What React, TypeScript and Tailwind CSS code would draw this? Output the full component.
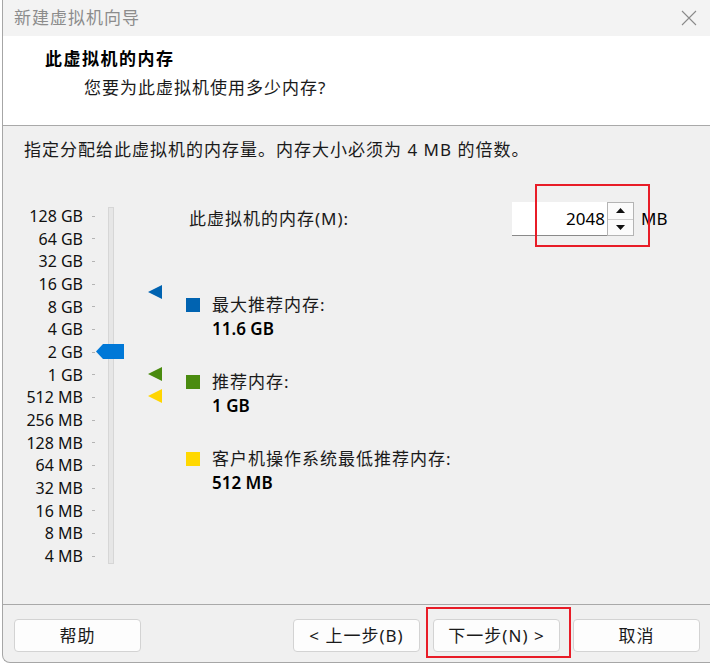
const levels = [
  '128 GB', '64 GB', '32 GB', '16 GB', '8 GB', '4 GB', '2 GB', '1 GB',
  '512 MB', '256 MB', '128 MB', '64 MB', '32 MB', '16 MB', '8 MB', '4 MB',
];

const font = "font-['Noto_Sans','Noto_Sans_CJK_SC',sans-serif]";

function Marker({ color, top }: { color: string; top: number }) {
  return (
    <svg
      width="14"
      height="14"
      viewBox="0 0 14 14"
      className="absolute left-[145px]"
      style={{ top }}
    >
      <polygon points="0,7 14,0 14,14" fill={color} />
    </svg>
  );
}

function Legend({ color, label, value }: { color: string; label: string; value: string }) {
  return (
    <div className="flex items-start">
      <div className={`w-[14px] h-[14px] mt-[5px] ${color}`}></div>
      <div className="ml-[12px] flex flex-col">
        <div className="h-[24px] leading-[24px] text-[17px] tracking-[1px] text-[#1a1a1a]">{label}</div>
        <div className="h-[24px] leading-[24px] text-[17px] font-semibold text-black">{value}</div>
      </div>
    </div>
  );
}

function Button({ children }: { children: React.ReactNode }) {
  return (
    <button
      type="button"
      className="w-[127px] h-[33px] bg-[#fdfdfd] border border-[#d3d3d3] rounded-[4px] text-[17px] tracking-[1px] text-[#1a1a1a] flex items-center justify-center"
    >
      {children}
    </button>
  );
}

export default function App() {
  return (
    <div className={`relative w-[710px] h-[663px] bg-white pl-[2px] ${font}`}>
      <div className="w-full h-full flex flex-col bg-[#f0f0f0] border-l border-b border-[#a6a6a6] rounded-bl-[8px] overflow-hidden">
        {/* title bar */}
        <div className="h-[36px] shrink-0 bg-[#f3f3f3] flex items-center justify-between pl-[11px] pr-[13px]">
          <span className="text-[17px] tracking-[1px] text-[#8c8c8c]">新建虚拟机向导</span>
          <svg width="16" height="16" viewBox="0 0 16 16" className="-mt-[1px]">
            <path d="M1 1 L15 15 M15 1 L1 15" stroke="#8a8a8a" strokeWidth="1.1" fill="none" />
          </svg>
        </div>

        {/* header */}
        <div className="h-[90px] shrink-0 bg-white border-b border-[#a9a9a9] pl-[42px] pt-[11px]">
          <div className="h-[24px] leading-[24px] text-[17px] tracking-[1.5px] font-bold text-black">此虚拟机的内存</div>
          <div className="mt-[5px] ml-[39px] h-[24px] leading-[24px] text-[17px] tracking-[1px] text-[#1a1a1a]">
            您要为此虚拟机使用多少内存?
          </div>
        </div>

        {/* body */}
        <div className="flex-1 flex flex-col">
          <div className="pl-[21px] pt-[12px] h-[36px] leading-[24px] text-[17px] tracking-[1px] text-[#1a1a1a]">
            指定分配给此虚拟机的内存量。内存大小必须为 4 MB 的倍数。
          </div>

          <div className="mt-[40px] flex">
            {/* slider */}
            <div className="relative w-[167px] h-[363px] mt-[3px] flex">
              <div className="w-[80px] flex flex-col">
                {levels.map((l) => (
                  <div key={l} className="h-[22.667px] leading-[22.667px] text-right text-[16px] text-[#111]">
                    {l}
                  </div>
                ))}
              </div>
              <div className="ml-[9px] w-[3px] flex flex-col">
                {levels.map((l) => (
                  <div key={l} className="h-[22.667px] flex items-center">
                    <div className="w-[3px] h-px bg-[#b4b4b4]"></div>
                  </div>
                ))}
              </div>
              <div className="ml-[13px] mt-[2px] w-[6px] h-[357px] bg-[#e6e6e6] border border-[#d6d6d6]"></div>

              <svg width="28" height="15" viewBox="0 0 28 15" className="absolute left-[93px] top-[139px]">
                <polygon points="0,7.5 7,0 28,0 28,15 7,15" fill="#0078d7" />
              </svg>
              <Marker color="#0063b1" top={80} />
              <Marker color="#4a8b0f" top={162} />
              <Marker color="#ffd500" top={184} />
            </div>

            {/* right panel */}
            <div className="ml-[16px] flex flex-col">
              <div className="flex items-center h-[34px]">
                <div className="pl-[3px] w-[326px] text-[17px] tracking-[1px] text-[#1a1a1a]">此虚拟机的内存(M):</div>
                <div className="w-[95px] h-[34px] bg-white border-b border-[#8a8a8a] flex items-center justify-end pr-[2px] text-[17px] text-black">
                  2048
                </div>
                <div className="w-[27px] h-[34px] border border-[#b4b4b4] flex flex-col bg-[#f4f4f4]">
                  <div className="flex-1 flex items-center justify-center border-b border-[#cfcfcf] bg-[#fbfbfb]">
                    <svg width="9" height="5" viewBox="0 0 9 5"><polygon points="4.5,0 9,5 0,5" fill="#111" /></svg>
                  </div>
                  <div className="flex-1 flex items-center justify-center bg-[#fbfbfb]">
                    <svg width="9" height="5" viewBox="0 0 9 5"><polygon points="0,0 9,0 4.5,5" fill="#111" /></svg>
                  </div>
                </div>
                <div className="ml-[7px] text-[17px] text-black">MB</div>
              </div>

              <div className="mt-[57px] flex flex-col gap-[29px]">
                <Legend color="bg-[#0063b1]" label="最大推荐内存:" value="11.6 GB" />
                <Legend color="bg-[#4a8b0f]" label="推荐内存:" value="1 GB" />
                <Legend color="bg-[#ffd800]" label="客户机操作系统最低推荐内存:" value="512 MB" />
              </div>
            </div>
          </div>
        </div>

        {/* footer */}
        <div className="h-[58px] shrink-0 border-t border-[#a9a9a9] pt-[14px] pl-[11px] pr-[10px] flex items-start">
          <Button>帮助</Button>
          <div className="flex-1"></div>
          <div className="flex gap-[13px]">
            <Button>&lt; 上一步(B)</Button>
            <Button>下一步(N) &gt;</Button>
            <Button>取消</Button>
          </div>
        </div>
      </div>

      {/* annotation boxes */}
      <div className="absolute left-[535px] top-[184px] w-[115px] h-[63px] border-[2.5px] border-[#e81c27]"></div>
      <div className="absolute left-[426px] top-[607px] w-[145px] h-[51px] border-[2.5px] border-[#e81c27]"></div>
    </div>
  );
}
